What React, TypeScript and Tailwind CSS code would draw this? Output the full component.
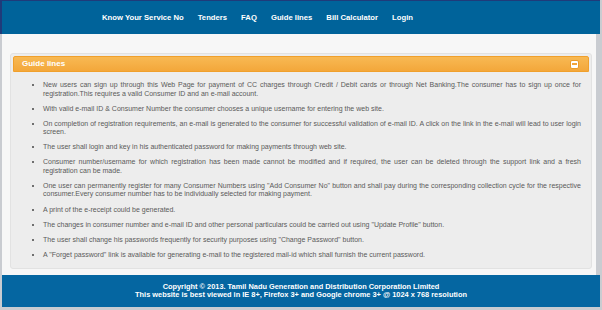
const navLinks = ["Know Your Service No", "Tenders", "FAQ", "Guide lines", "Bill Calculator", "Login"];

const guideLines = [
  "New users can sign up through this Web Page for payment of CC charges through Credit / Debit cards or through Net Banking.The consumer has to sign up once for registration.This requires a valid Consumer ID and an e-mail account.",
  "With valid e-mail ID & Consumer Number the consumer chooses a unique username for entering the web site.",
  "On completion of registration requirements, an e-mail is generated to the consumer for successful validation of e-mail ID. A click on the link in the e-mail will lead to user login screen.",
  "The user shall login and key in his authenticated password for making payments through web site.",
  "Consumer number/username for which registration has been made cannot be modified and if required, the user can be deleted through the support link and a fresh registration can be made.",
  "One user can permanently register for many Consumer Numbers using \"Add Consumer No\" button and shall pay during the corresponding collection cycle for the respective consumer.Every consumer number has to be individually selected for making payment.",
  "A print of the e-receipt could be generated.",
  "The changes in consumer number and e-mail ID and other personal particulars could be carried out using \"Update Profile\" button.",
  "The user shall change his passwords frequently for security purposes using \"Change Password\" button.",
  "A \"Forget password\" link is available for generating e-mail to the registered mail-id which shall furnish the current password.",
];

export default function App() {
  return (
    <div className="h-[310px] w-[602px] overflow-hidden bg-[#c9ccd1] font-['Liberation_Sans',Arial,sans-serif]">
      <nav className="flex h-[34px] w-[600px] items-center gap-[14px] border-l-2 border-t border-[#1f3b7a] bg-[#00639a] pl-[100px] text-[7.7px] font-bold text-white">
        {navLinks.map((link) => (
          <a key={link} href="#" className="whitespace-nowrap">
            {link}
          </a>
        ))}
      </nav>

      <main className="ml-[2px] h-[241px] w-[594px] bg-[#f7f7f7] pl-[8px] pt-[19px]">
        <section className="w-[582px] rounded-[3px] border border-[#e2e2e2] bg-[#ededed] p-[2px]">
          <div className="flex h-[16px] items-center justify-between rounded-t-[2px] border border-[#f0a02c] bg-gradient-to-b from-[#f8b953] to-[#f3a73a] pl-[8px] pr-[9px]">
            <span className="text-[8px] font-bold text-white">Guide lines</span>
            <button
              type="button"
              aria-label="Collapse"
              className="flex h-[9px] w-[9px] items-center justify-center rounded-[2px] border border-[#e99a2a] bg-white"
            >
              <span className="h-[1.5px] w-[5px] bg-[#f2a43a]" />
            </button>
          </div>
          <ul className="flex list-disc flex-col gap-[6.6px] pb-[7px] pl-[30px] pr-[8px] pt-[9px] text-justify text-[7px] leading-[8.5px] text-[#5a5a5a] marker:text-[#444]">
            {guideLines.map((line) => (
              <li key={line}>{line}</li>
            ))}
          </ul>
        </section>
      </main>

      <footer className="ml-[2px] flex h-[32px] w-[598px] flex-col items-center justify-center bg-[#0566a1] text-center text-[7.4px] font-bold leading-[8px] text-white">
        <p>Copyright © 2013. Tamil Nadu Generation and Distribution Corporation Limited</p>
        <p>This website is best viewed in IE 8+, Firefox 3+ and Google chrome 3+ @ 1024 x 768 resolution</p>
      </footer>
    </div>
  );
}
